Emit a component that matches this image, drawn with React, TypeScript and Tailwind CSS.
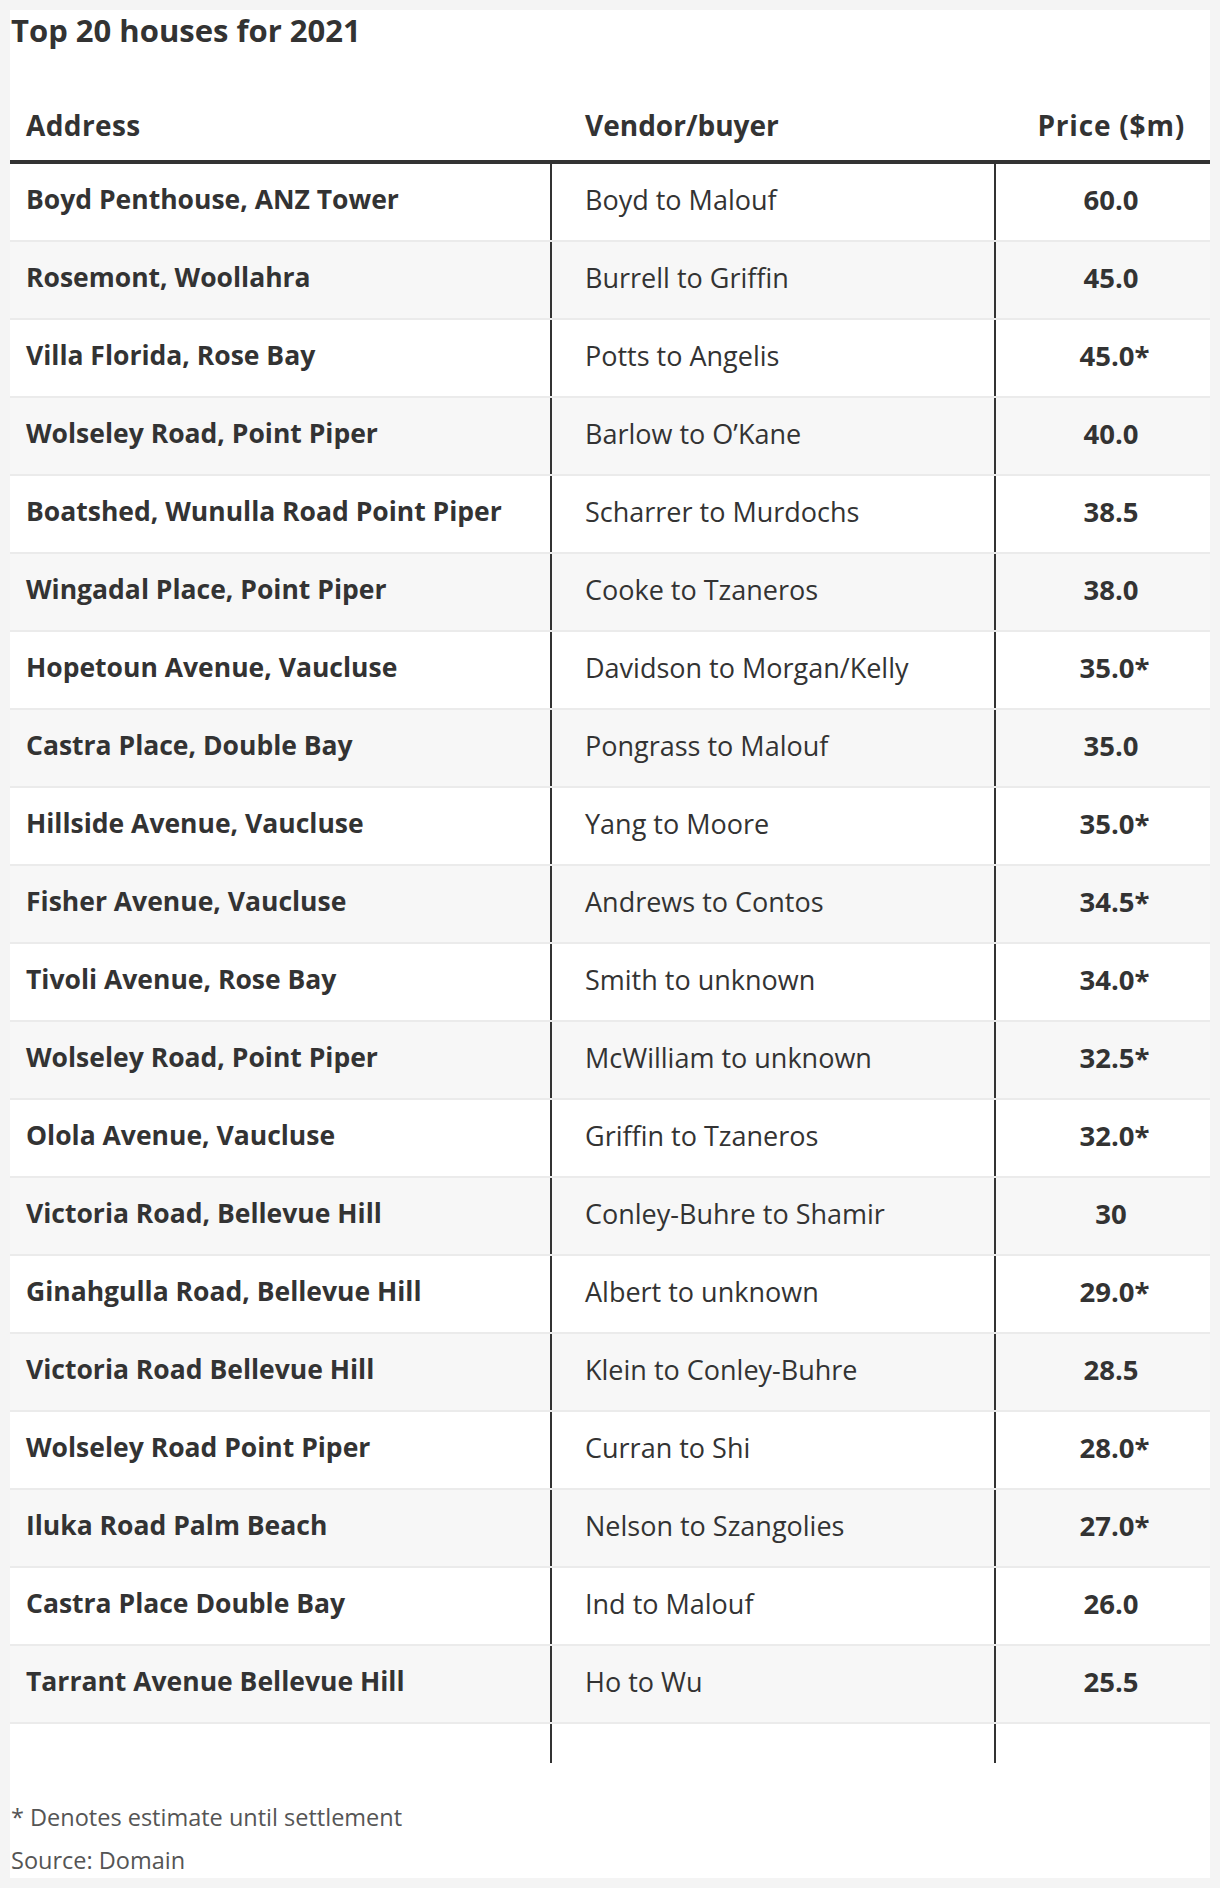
const rows: [string, string, string, boolean][] = [
  ["Boyd Penthouse, ANZ Tower", "Boyd to Malouf", "60.0", false],
  ["Rosemont, Woollahra", "Burrell to Griffin", "45.0", false],
  ["Villa Florida, Rose Bay", "Potts to Angelis", "45.0", true],
  ["Wolseley Road, Point Piper", "Barlow to O\u2019Kane", "40.0", false],
  ["Boatshed, Wunulla Road Point Piper", "Scharrer to Murdochs", "38.5", false],
  ["Wingadal Place, Point Piper", "Cooke to Tzaneros", "38.0", false],
  ["Hopetoun Avenue, Vaucluse", "Davidson to Morgan/Kelly", "35.0", true],
  ["Castra Place, Double Bay", "Pongrass to Malouf", "35.0", false],
  ["Hillside Avenue, Vaucluse", "Yang to Moore", "35.0", true],
  ["Fisher Avenue, Vaucluse", "Andrews to Contos", "34.5", true],
  ["Tivoli Avenue, Rose Bay", "Smith to unknown", "34.0", true],
  ["Wolseley Road, Point Piper", "McWilliam to unknown", "32.5", true],
  ["Olola Avenue, Vaucluse", "Griffin to Tzaneros", "32.0", true],
  ["Victoria Road, Bellevue Hill", "Conley-Buhre to Shamir", "30", false],
  ["Ginahgulla Road, Bellevue Hill", "Albert to unknown", "29.0", true],
  ["Victoria Road Bellevue Hill", "Klein to Conley-Buhre", "28.5", false],
  ["Wolseley Road Point Piper", "Curran to Shi", "28.0", true],
  ["Iluka Road Palm Beach", "Nelson to Szangolies", "27.0", true],
  ["Castra Place Double Bay", "Ind to Malouf", "26.0", false],
  ["Tarrant Avenue Bellevue Hill", "Ho to Wu", "25.5", false],
];

export default function App() {
  return (
    <div className="min-h-[1888px] bg-[#f4f4f4] p-[10px] text-[#333] font-['Open_Sans',sans-serif]">
      <div className="bg-white w-[1200px] h-[1868px]">
        <h1 className="text-[31px] font-bold leading-[38px] pt-[1px] pl-[1px]">Top 20 houses for 2021</h1>

        {/* table header */}
        <div className="grid grid-cols-[542px_444px_214px] mt-[58px] border-b-4 border-[#333] text-[28px] font-bold leading-[36px] pb-[17px]">
          <div className="pl-4 tracking-[0.4px]">Address</div>
          <div className="pl-[33px]">Vendor/buyer</div>
          <div className="text-right pr-[25px] tracking-[0.8px]">Price ($m)</div>
        </div>

        {rows.map(([address, vendor, price, est], i) => (
          <div
            key={i}
            className={`grid grid-cols-[542px_444px_214px] h-[78px] border-b-2 border-[#ebebeb] ${
              i % 2 === 1 ? "bg-[#f7f7f7]" : "bg-white"
            }`}
          >
            <div className="flex items-center pl-4 pb-[4px] text-[26.5px] font-bold border-r-2 border-[#333]">{address}</div>
            <div className="flex items-center pl-[33px] pb-[4px] text-[27px] border-r-2 border-[#333]">{vendor}</div>
            <div className="flex items-center justify-center pl-8 pr-4 pb-[4px] text-[27.5px] font-bold">
              <span className={`relative ${est ? "-ml-[8px]" : ""}`}>
                {price}
                {est && <span className="absolute left-full top-0">*</span>}
              </span>
            </div>
          </div>
        ))}

        {/* trailing empty row */}
        <div className="grid grid-cols-[542px_444px_214px] h-[39px]">
          <div className="border-r-2 border-[#333]" />
          <div className="border-r-2 border-[#333]" />
          <div />
        </div>

        <div className="mt-[34px] text-[23.5px] text-[#555] pl-[1px]">
          <p className="leading-[40px]">* Denotes estimate until settlement</p>
          <p className="leading-[40px] mt-[3px]">Source: Domain</p>
        </div>
      </div>
    </div>
  );
}
